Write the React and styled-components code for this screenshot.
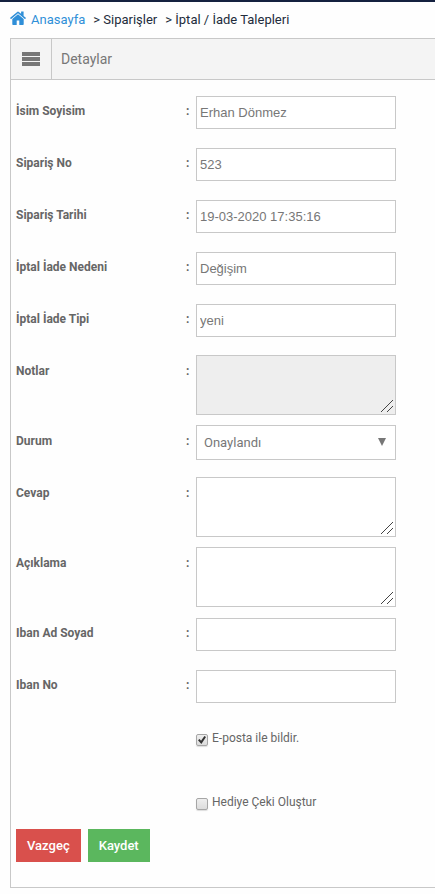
import React, { useState } from "react";
import styled, { createGlobalStyle } from "styled-components";

const fields = [
  { id: "name", label: "İsim Soyisim", type: "text", value: "Erhan Dönmez" },
  { id: "orderNo", label: "Sipariş No", type: "text", value: "523" },
  { id: "orderDate", label: "Sipariş Tarihi", type: "text", value: "19-03-2020 17:35:16" },
  { id: "reason", label: "İptal İade Nedeni", type: "text", value: "Değişim" },
  { id: "kind", label: "İptal İade Tipi", type: "text", value: "yeni" },
  { id: "notes", label: "Notlar", type: "area", disabled: true },
  { id: "status", label: "Durum", type: "select", options: ["Onaylandı", "Beklemede", "Reddedildi"] },
  { id: "answer", label: "Cevap", type: "area" },
  { id: "description", label: "Açıklama", type: "area" },
  { id: "ibanName", label: "Iban Ad Soyad", type: "text", value: "" },
  { id: "ibanNo", label: "Iban No", type: "text", value: "" },
];

const HomeIcon = () => (
  <svg width="16" height="14" viewBox="0 0 16 14" fill="currentColor" aria-hidden="true">
    <path d="M8 3.3 2.3 8v5.2c0 .4.3.7.7.7h3.7V9.6h2.6v4.3H13c.4 0 .7-.3.7-.7V8z" />
    <path d="M15.8 6.8 13.6 5V.8c0-.2-.1-.3-.3-.3h-1.9c-.2 0-.3.1-.3.3v2L8.8.9a1.3 1.3 0 0 0-1.6 0l-7 5.9c-.1.1-.1.3 0 .4l.6.7c.1.1.3.2.4.1L8 2.3 14.8 8c.1.1.3 0 .4-.1l.6-.7c.1-.1.1-.3 0-.4z" />
  </svg>
);

const Field = ({ field }) => {
  if (field.type === "area") {
    return <TextArea id={field.id} disabled={field.disabled} />;
  }
  if (field.type === "select") {
    return (
      <SelectBox>
        <select id={field.id}>
          {field.options.map((option) => (
            <option key={option}>{option}</option>
          ))}
        </select>
        <svg width="8" height="8" viewBox="0 0 8 8" aria-hidden="true">
          <path d="M0 0h8L4 8z" fill="currentColor" />
        </svg>
      </SelectBox>
    );
  }
  return <Input id={field.id} type="text" defaultValue={field.value} />;
};

const App = () => {
  const [notify, setNotify] = useState(true);
  const [voucher, setVoucher] = useState(false);
  return (
    <>
      <GlobalStyle />
      <TopLine />
      <Breadcrumb aria-label="breadcrumb">
        <a href="#home">
          <HomeIcon />
          Anasayfa
        </a>
        <span>&gt; Siparişler</span>
        <span>&gt; İptal / İade Talepleri</span>
      </Breadcrumb>
      <Panel>
        <PanelHeader>
          <MenuButton type="button" aria-label="Menü">
            <svg width="18" height="14" viewBox="0 0 18 14" aria-hidden="true">
              <path d="M0 0h18v4H0zM0 5h18v4H0zM0 10h18v4H0z" fill="currentColor" />
            </svg>
          </MenuButton>
          <h2>Detaylar</h2>
        </PanelHeader>
        <Form onSubmit={(e) => e.preventDefault()}>
          {fields.map((field) => (
            <Row key={field.id} $tall={field.type === "area"}>
              <Label htmlFor={field.id}>{field.label}</Label>
              <Colon>:</Colon>
              <Field field={field} />
            </Row>
          ))}
          <CheckRow>
            <input type="checkbox" checked={notify} onChange={() => setNotify(!notify)} />
            E-posta ile bildir.
          </CheckRow>
          <CheckRow $last>
            <input type="checkbox" checked={voucher} onChange={() => setVoucher(!voucher)} />
            Hediye Çeki Oluştur
          </CheckRow>
          <Actions>
            <Button type="button" $color="#d9504c">
              Vazgeç
            </Button>
            <Button type="submit" $color="#5bb75e">
              Kaydet
            </Button>
          </Actions>
        </Form>
      </Panel>
    </>
  );
};

export default App;

const GlobalStyle = createGlobalStyle`
  * {
    box-sizing: border-box;
  }
  body {
    margin: 0;
    background: #fefefe;
    color: #666;
    font-family: Roboto, "Liberation Sans", sans-serif;
    font-size: 12px;
    overflow-x: hidden;
  }
`;

const TopLine = styled.div`
  height: 2px;
  background: #14213f;
`;

const Breadcrumb = styled.nav`
  display: flex;
  align-items: center;
  gap: 8px;
  height: 36px;
  padding: 0 0 2px 10px;
  color: #222c3c;
  font-size: 13px;
  white-space: nowrap;

  a {
    display: flex;
    align-items: center;
    gap: 5px;
    color: #2f8fd8;
    text-decoration: none;
  }
  svg {
    margin-bottom: 2px;
  }
`;

const Panel = styled.section`
  margin-left: 10px;
  border: 1px solid #c8c8c8;
  border-right: none;
`;

const PanelHeader = styled.header`
  display: flex;
  align-items: center;
  height: 41px;
  background: #f4f4f4;
  border-bottom: 1px solid #c8c8c8;

  h2 {
    margin: 0;
    padding-left: 9px;
    color: #777;
    font-size: 14px;
    font-weight: 400;
  }
`;

const MenuButton = styled.button`
  display: flex;
  align-items: center;
  justify-content: center;
  align-self: stretch;
  width: 41px;
  padding: 0;
  border: none;
  border-right: 1px solid #c8c8c8;
  background: none;
  color: #777;
`;

const Form = styled.form`
  padding: 15px 5px 25px;
`;

const Row = styled.div`
  display: grid;
  grid-template-columns: 170px 10px 200px;
  align-items: start;
  height: ${(props) => (props.$tall ? "70px" : "52px")};
`;

const Label = styled.label`
  font-weight: 700;
  line-height: 32px;
`;

const Colon = styled.span`
  font-weight: 700;
  line-height: 32px;
`;

const Input = styled.input`
  width: 100%;
  height: 33px;
  margin: 1px 0 0;
  padding: 0 3px;
  border: 1px solid #c8c8c8;
  background: #fff;
  color: #777;
  font-family: "Liberation Sans", sans-serif;
  font-size: 13px;
`;

const TextArea = styled.textarea`
  width: 100%;
  height: 60px;
  margin: 0;
  padding: 4px;
  border: 1px solid #c8c8c8;
  background: ${(props) => (props.disabled ? "#eee" : "#fff")};
  color: #777;
  font-family: "Liberation Sans", sans-serif;
  font-size: 13px;

  &::-webkit-resizer {
    background: linear-gradient(
        135deg,
        transparent 47%,
        #444 48%,
        #444 52%,
        transparent 53%,
        transparent 72%,
        #444 73%,
        #444 77%,
        transparent 78%
      )
      1px 1px / 12px 12px no-repeat;
  }
`;

const SelectBox = styled.div`
  display: grid;
  align-items: center;
  height: 35px;
  border: 1px solid #c8c8c8;
  background: #fff;
  color: #777;

  select,
  svg {
    grid-area: 1 / 1;
  }
  select {
    width: 100%;
    height: 33px;
    padding: 0 24px 0 7px;
    appearance: none;
    border: none;
    background: none;
    color: #777;
    font-family: Roboto, sans-serif;
    font-size: 13px;
  }
  svg {
    justify-self: end;
    margin: 0 9px 2px 0;
    pointer-events: none;
  }
`;

const CheckRow = styled.label`
  display: flex;
  align-items: flex-start;
  gap: 4px;
  width: fit-content;
  height: ${(props) => (props.$last ? "44px" : "64px")};
  margin-left: 180px;
  line-height: 34px;

  input {
    display: grid;
    place-items: center;
    width: 12px;
    height: 12px;
    margin: 13px 0 0;
    appearance: none;
    border: 1px solid #a6a6a6;
    border-radius: 2px;
    background: linear-gradient(#eee, #dcdcdc);
    box-shadow: 0 1px 1px #ddd;
  }
  input:checked::before {
    content: "";
    width: 8px;
    height: 8px;
    background: #333;
    clip-path: polygon(0 52%, 20% 38%, 38% 58%, 80% 0, 100% 14%, 42% 100%);
  }
`;

const Actions = styled.div`
  display: flex;
  gap: 7px;
`;

const Button = styled.button`
  height: 33px;
  padding: 0 11px;
  border: none;
  background: ${(props) => props.$color};
  color: #fff;
  font-family: Roboto, sans-serif;
  font-size: 13px;
  font-weight: 500;
  cursor: pointer;
`;
